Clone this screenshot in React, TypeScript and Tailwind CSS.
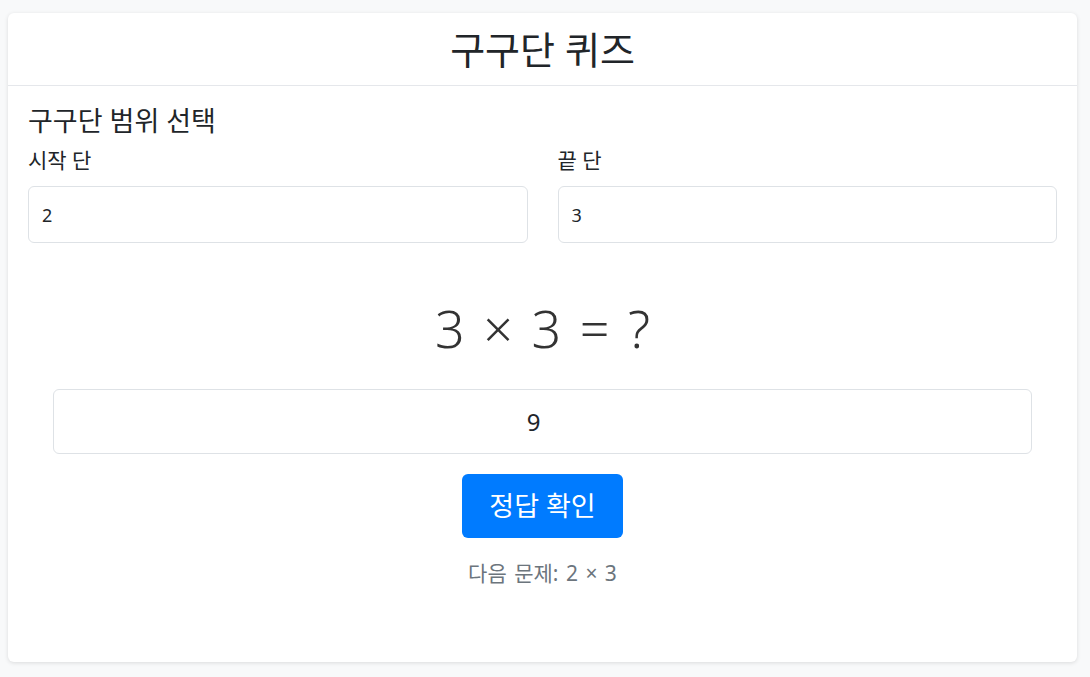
import React, { useState } from 'react';

const font = { fontFamily: '"Noto Sans", "Noto Sans CJK KR", sans-serif' };

const App = () => {
    const [start, setStart] = useState('2');
    const [end, setEnd] = useState('3');
    const [answer, setAnswer] = useState('9');

    return (
        <div className="min-h-[677px] bg-[#f8f9fa] pt-[13px] pl-2 pr-[13px]" style={font}>
            <div className="h-[649px] bg-white rounded-md shadow-[0_1px_4px_rgba(0,0,0,0.12)] flex flex-col">
                {/* header */}
                <div className="h-[73px] border-b border-[#e5e7eb] flex items-center justify-center">
                    <h1 className="text-[38px] text-[#212529] leading-none">구구단 퀴즈</h1>
                </div>

                <div className="px-5 pt-[19px]">
                    <h2 className="text-[27px] leading-[32px] text-[#212529]">구구단 범위 선택</h2>
                    <div className="grid grid-cols-2 gap-[30px] mt-[9px]">
                        <div>
                            <label className="block text-[21px] leading-[28px] text-[#212529]">시작 단</label>
                            <input
                                type="text"
                                value={start}
                                onChange={e => setStart(e.target.value)}
                                className="mt-[12px] w-full h-[57px] border border-[#dee2e6] rounded-md px-[13px] text-[18px] text-[#212529] outline-none"
                            />
                        </div>
                        <div>
                            <label className="block text-[21px] leading-[28px] text-[#212529]">끝 단</label>
                            <input
                                type="text"
                                value={end}
                                onChange={e => setEnd(e.target.value)}
                                className="mt-[12px] w-full h-[57px] border border-[#dee2e6] rounded-md px-[13px] text-[18px] text-[#212529] outline-none"
                            />
                        </div>
                    </div>

                    <div className="mt-[53px] text-center text-[52px] leading-[64px] text-[#333] font-light [word-spacing:5px]">3 × 3 = ?</div>

                    <div className="px-[25px] mt-[29px]">
                        <input
                            type="text"
                            value={answer}
                            onChange={e => setAnswer(e.target.value)}
                            className="w-full h-[65px] border border-[#dee2e6] rounded-md text-center pr-[18px] text-[24px] text-[#212529] outline-none"
                        />
                    </div>

                    <div className="flex justify-center mt-[20px]">
                        <button className="w-[161px] h-[64px] bg-[#007bff] text-white text-[27px] rounded-md">정답 확인</button>
                    </div>

                    <p className="text-center text-[21px] leading-[30px] text-[#6c757d] mt-[20px] [word-spacing:2px]">다음 문제: 2 × 3</p>
                </div>
            </div>
        </div>
    );
};

export default App;
